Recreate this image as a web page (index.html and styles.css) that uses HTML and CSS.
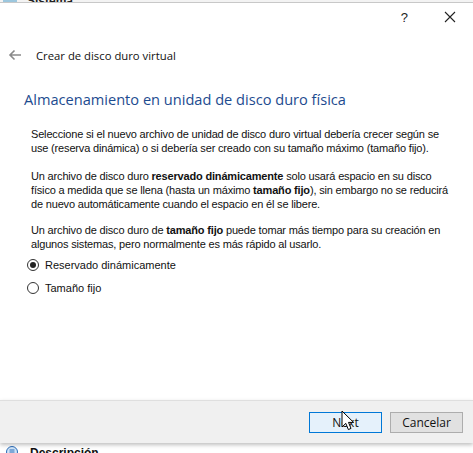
FILE: index.html
```html
<!DOCTYPE html>
<html lang="es">
<head>
<meta charset="utf-8">
<link rel="stylesheet" href="styles.css">
</head>
<body>
<div class="under-top"><span class="under-icon"></span><span class="under-title">Sistema</span></div>
<div class="dialog">
  <div class="titlebar">
    <span class="help">?</span>
    <svg class="close" width="12" height="12" viewBox="0 0 12 12"><path d="M1 1 L11 11 M11 1 L1 11" stroke="#222" stroke-width="1.1" fill="none"/></svg>
  </div>
  <div class="nav">
    <svg class="back" width="14" height="12" viewBox="0 0 14 12"><path d="M13 6 H2 M6.5 1.5 L2 6 L6.5 10.5" stroke="#8a8a8a" stroke-width="1.6" fill="none"/></svg>
    <span class="nav-title">Crear de disco duro virtual</span>
  </div>
  <div class="content">
    <h1 class="heading">Almacenamiento en unidad de disco duro física</h1>
    <div class="body">
      <p class="p1">Seleccione si el nuevo archivo de unidad de disco duro virtual debería crecer según se<br>use (reserva dinámica) o si debería ser creado con su tamaño máximo (tamaño fijo).</p>
      <p class="p2">Un archivo de disco duro <b>reservado dinámicamente</b> solo usará espacio en su disco<br>físico a medida que se llena (hasta un máximo <b>tamaño fijo</b>), sin embargo no se reducirá<br>de nuevo automáticamente cuando el espacio en él se libere.</p>
      <p class="p3">Un archivo de disco duro de <b>tamaño fijo</b> puede tomar más tiempo para su creación en<br>algunos sistemas, pero normalmente es más rápido al usarlo.</p>
    </div>
    <div class="radios">
      <label class="radio"><span class="dot checked"></span>Reservado dinámicamente</label>
      <label class="radio"><span class="dot"></span>Tamaño fijo</label>
    </div>
  </div>
  <div class="footer">
    <div class="btn primary">Next
      <svg class="cursor" width="14" height="22" viewBox="0 0 14 22"><path d="M1 1 L1 17 L4.8 13.4 L7.4 19.6 L10 18.4 L7.5 12.4 L12.6 12.4 Z" fill="#fff" stroke="#000" stroke-width="1" stroke-linejoin="miter"/></svg>
    </div>
    <div class="btn">Cancelar</div>
  </div>
</div>
<div class="under-bottom">
  <svg class="desc-icon" width="12" height="12" viewBox="0 0 12 12"><circle cx="6" cy="6" r="5.5" fill="#cfe3f7" stroke="#2b6cb8"/><path d="M3.5 4 H8.5 M3.5 6 H8.5 M3.5 8 H8.5" stroke="#2b6cb8" stroke-width="1"/></svg>
  <span class="desc">Descripción</span>
</div>
</body>
</html>
```

FILE: styles.css
```css
* { box-sizing: border-box; }
html, body { margin: 0; padding: 0; }
body {
  width: 473px;
  height: 453px;
  overflow: hidden;
  background: #fff;
  font-family: "Open Sans", "Liberation Sans", sans-serif;
  color: #000;
}
.under-top {
  height: 3px;
  overflow: hidden;
  background: #f3f3f3;
  border-bottom: 1px solid #c8c8c8;
  display: flex;
  align-items: flex-end;
}
.under-icon {
  display: inline-block;
  width: 14px;
  height: 2px;
  margin-left: 3px;
  background: #9cc7de;
}
.under-title {
  margin-left: 10px;
  font: bold 12px "Liberation Sans", sans-serif;
  line-height: 2px;
  height: 2px;
  color: #222;
  overflow: hidden;
}
.dialog {
  height: 440px;
  display: flex;
  flex-direction: column;
  background: #fff;
}
.titlebar {
  height: 28px;
  display: flex;
  align-items: center;
  justify-content: flex-end;
  padding-right: 17px;
  gap: 36px;
}
.help {
  font: 13px "Liberation Sans", sans-serif;
  color: #222;
}
.close { display: block; }
.nav {
  height: 48px;
  display: flex;
  align-items: center;
  padding-left: 8px;
}
.back { display: block; margin-right: 14px; }
.nav-title {
  font-size: 11.3px;
  color: #111;
}
.content {
  flex: 1;
  padding: 10px 0 0 24px;
}
.heading {
  margin: 0;
  font-weight: normal;
  font-size: 14.6px;
  color: #1d4b8f;
  line-height: 20px;
}
.body {
  padding: 18px 0 0 7px;
  font-family: "Liberation Sans", sans-serif;
  font-size: 11px;
  letter-spacing: -0.17px;
  line-height: 14px;
  color: #111;
  white-space: nowrap;
}
.body p { margin: 0; }
.body .p1 { margin-bottom: 14px; }
.body .p2 { margin-bottom: 12px; }
.body b { font-weight: bold; }
.radios {
  display: flex;
  flex-direction: column;
  gap: 9px;
  padding: 7px 0 0 3px;
  font-family: "Liberation Sans", sans-serif;
  font-size: 11px;
  color: #111;
}
.radio {
  display: flex;
  align-items: center;
  gap: 6px;
  height: 14px;
}
.dot {
  width: 12px;
  height: 12px;
  border: 1px solid #333;
  border-radius: 50%;
  background: #fff;
  display: flex;
  align-items: center;
  justify-content: center;
}
.dot.checked::after {
  content: "";
  width: 6px;
  height: 6px;
  border-radius: 50%;
  background: #222;
}
.footer {
  height: 43px;
  background: #f0f0f0;
  border-top: 1px solid #dfdfdf;
  display: flex;
  justify-content: flex-end;
  align-items: center;
  gap: 8px;
  padding-right: 10px;
  box-shadow: 0 2px 4px rgba(0,0,0,0.25);
  position: relative;
}
.btn {
  width: 73px;
  height: 21px;
  border: 1px solid #adadad;
  background: #e1e1e1;
  font-size: 12px;
  display: flex;
  align-items: center;
  justify-content: center;
  color: #111;
  position: relative;
}
.btn.primary {
  border-color: #0078d7;
  background: #e5f1fb;
}
.cursor {
  position: absolute;
  left: 31px;
  top: -3px;
}
.under-bottom {
  height: 10px;
  display: flex;
  align-items: flex-start;
  padding: 3px 0 0 6px;
  gap: 12px;
  background: #fff;
  overflow: hidden;
}
.desc-icon { display: block; flex: none; }
.desc {
  font: bold 12px "Liberation Sans", sans-serif;
  line-height: 14px;
  color: #111;
}
```
